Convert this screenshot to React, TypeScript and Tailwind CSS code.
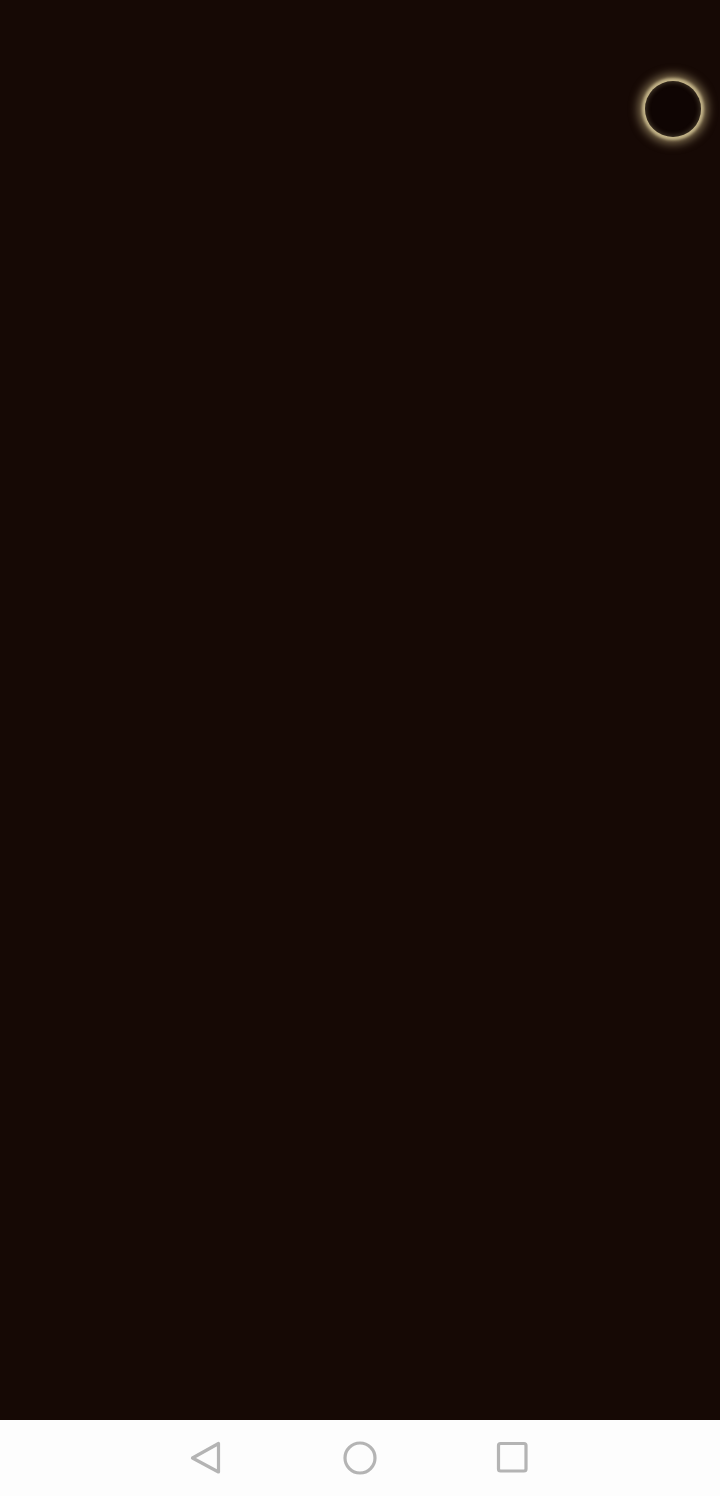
import React from 'react';

const NavBar: React.FC = () => (
  <nav className="h-[76px] bg-[#fdfdfd] flex items-center justify-center gap-[108px] pb-[1px]">
    <svg width="44" height="44" viewBox="0 0 44 44" fill="none" className="-mr-[1px] -ml-[1px]">
      <path d="M32.5 7.5 L32.5 36 L6.5 22 Z" stroke="#b4b4b4" strokeWidth="3.2" strokeLinejoin="round" />
    </svg>
    <svg width="44" height="44" viewBox="0 0 44 44" fill="none">
      <circle cx="23" cy="22" r="15" stroke="#b4b4b4" strokeWidth="3.2" />
    </svg>
    <svg width="44" height="44" viewBox="0 0 44 44" fill="none">
      <rect x="9.5" y="7.5" width="27.5" height="27.5" rx="2" stroke="#b4b4b4" strokeWidth="3.2" />
    </svg>
  </nav>
);

const App: React.FC = () => {
  return (
    <div className="flex flex-col h-[1496px] w-[720px] overflow-hidden bg-[#160905]">
      <main className="flex-1 relative">
        <div className="absolute left-[645px] top-[81px] w-[56px] h-[56px] rounded-full bg-[#0f0503] shadow-[0_0_3px_3px_rgba(200,184,140,0.95),0_0_10px_7px_rgba(190,172,125,0.6),inset_0_0_5px_1px_rgba(200,184,140,0.3)]" />
      </main>
      <NavBar />
    </div>
  );
};

export default App;
